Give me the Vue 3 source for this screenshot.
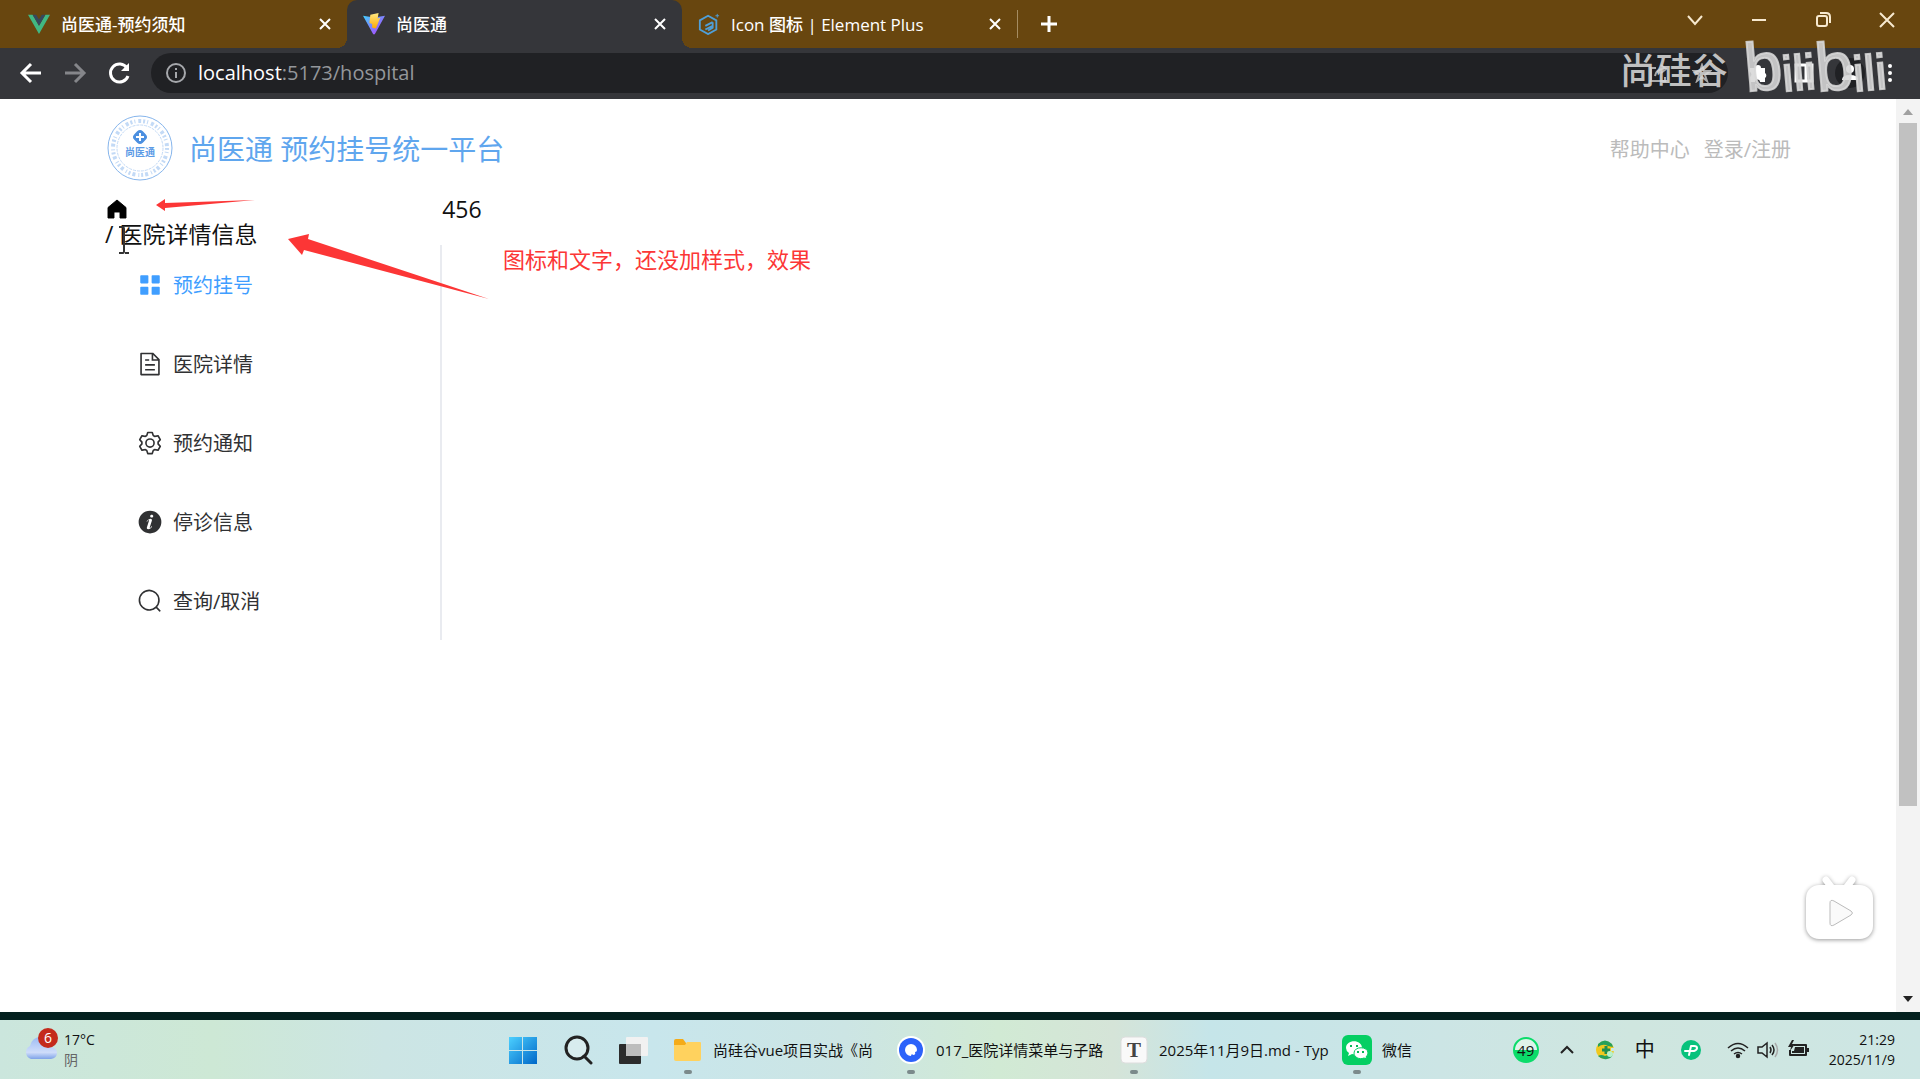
<template>
  <div class="desktop">
    <!-- Browser tabs -->
    <header class="tab-strip">
      <div v-for="tab in tabs" :key="tab.title" class="tab" :class="{ active: tab.active }">
        <svg v-if="tab.icon === 'vue'" class="favicon" viewBox="0 0 24 24">
          <path d="M0 2h5l7 12 7-12h5L12 23z" fill="#41b883" />
          <path d="M5 2h4l3 5 3-5h4l-7 12z" fill="#35495e" />
        </svg>
        <svg v-else-if="tab.icon === 'vite'" class="favicon" viewBox="0 0 24 24">
          <defs>
            <linearGradient id="viteBlue" x1="0" y1="0" x2="1" y2="1">
              <stop offset="0" stop-color="#41d1ff" />
              <stop offset="1" stop-color="#bd34fe" />
            </linearGradient>
            <linearGradient id="viteGold" x1="0" y1="0" x2="0" y2="1">
              <stop offset="0" stop-color="#ffea83" />
              <stop offset="1" stop-color="#ffa800" />
            </linearGradient>
          </defs>
          <path d="M0 3l12 2 12-2-11 20q-1 1-2 0z" fill="url(#viteBlue)" />
          <path d="M17 0l-9 2-1 9 3 1v4l4 1 5-12-3 1 1-6z" fill="url(#viteGold)" />
        </svg>
        <svg v-else class="favicon" viewBox="0 0 24 24" fill="none" stroke="#4f9fd8" stroke-width="2">
          <path d="M11 3l9 5v10l-9 5-9-5V8z" />
          <path d="M16 10l-8 4M16 14l-8 4M16 10v6l-5 3" />
          <path d="M21 1v4M19 3h4" stroke-width="1" />
        </svg>
        <span class="tab-title">{{ tab.title }}</span>
        <button class="tab-close" aria-label="关闭">
          <svg viewBox="0 0 16 16"><path d="M3 3l10 10M13 3L3 13" /></svg>
        </button>
      </div>
      <button class="new-tab" aria-label="新标签页">
        <svg viewBox="0 0 18 18"><path d="M9 1v16M1 9h16" /></svg>
      </button>
      <div class="window-controls">
        <button aria-label="搜索标签页"><svg viewBox="0 0 16 16"><path d="M1 4l7 8 7-8" /></svg></button>
        <button aria-label="最小化"><svg viewBox="0 0 16 16"><path d="M1 8h14" /></svg></button>
        <button aria-label="还原">
          <svg viewBox="0 0 16 16"><rect x="2" y="4" width="10" height="10" rx="2" /><path d="M5 1h6q4 0 4 4v6" /></svg>
        </button>
        <button aria-label="关闭窗口"><svg viewBox="0 0 16 16"><path d="M1 1l14 14M15 1L1 15" /></svg></button>
      </div>
    </header>

    <!-- Toolbar -->
    <div class="toolbar">
      <button class="nav-btn" aria-label="后退">
        <svg viewBox="0 0 24 24"><path d="M22 12H3M12 3l-9 9 9 9" /></svg>
      </button>
      <button class="nav-btn dim" aria-label="前进">
        <svg viewBox="0 0 24 24"><path d="M2 12h19M12 3l9 9-9 9" /></svg>
      </button>
      <button class="nav-btn" aria-label="刷新">
        <svg viewBox="0 0 24 24"><path d="M20 7a9 9 0 1 0 1 8" /><path d="M22 2v8h-8z" fill="#fff" stroke="none" /></svg>
      </button>
      <div class="address">
        <svg class="info" viewBox="0 0 20 20"><circle cx="10" cy="10" r="9" /><path d="M10 9v6M10 5v2" /></svg>
        <label for="url">localhost</label>
        <input id="url" v-model="url" type="text" />
        <button aria-label="分享">
          <svg viewBox="0 0 20 20"><path d="M7 5H2v13h14v-4M6 13q1-7 9-7M12 2l5 4-5 4" /></svg>
        </button>
        <button aria-label="收藏">
          <svg viewBox="0 0 20 20"><path d="M10 2l2 6h6l-5 4 2 6-5-4-5 4 2-6-5-4h6z" /></svg>
        </button>
      </div>
      <div class="toolbar-icons">
        <button aria-label="扩展程序">
          <svg viewBox="0 0 20 20"><path d="M2 5h5a3 3 0 0 1 6 0h4v5a3 3 0 0 1 0 5v4h-5a2 2 0 0 0-5 0H2v-5a3 3 0 0 0 0-5z" fill="#fff" /></svg>
        </button>
        <button aria-label="侧边栏">
          <svg viewBox="0 0 20 20"><path d="M2 2h16v16H2zM12 2v16" fill="none" stroke="#fff" stroke-width="3" /></svg>
        </button>
        <button class="avatar" aria-label="个人资料">
          <svg viewBox="0 0 20 20"><circle cx="10" cy="6" r="4" fill="#fff" /><path d="M2 17q0-5 8-5t8 5z" fill="#fff" /></svg>
        </button>
        <button class="more" aria-label="更多">
          <svg viewBox="0 0 8 20"><circle cx="4" cy="3" r="2" /><circle cx="4" cy="10" r="2" /><circle cx="4" cy="17" r="2" /></svg>
        </button>
      </div>
      <div class="watermark">
        <span class="brand">尚硅谷</span>
        <span class="bili"><b>b</b><i>ili</i><b>b</b><i>ili</i></span>
      </div>
    </div>

    <!-- Page -->
    <div class="viewport">
      <div class="page">
        <div class="top">
          <svg class="logo" viewBox="0 0 70 70">
            <circle cx="35" cy="35" r="32" fill="none" stroke="#86b5ec" />
            <circle cx="35" cy="35" r="27" fill="none" stroke="#c3daf6" stroke-width="4" stroke-dasharray="2 2 1 3 3 2" />
            <circle cx="35" cy="35" r="23" fill="#fff" stroke="#c3daf6" stroke-width="1" stroke-dasharray="3 1" />
            <rect x="29" y="18" width="12" height="12" rx="4" transform="rotate(45 35 24)" fill="#4b8fe0" />
            <path d="M35 20v8M31 24h8" stroke="#fff" stroke-width="2" />
            <text x="35" y="43" text-anchor="middle" font-size="10" font-weight="700" fill="#5c9be6">尚医通</text>
          </svg>
          <h1>尚医通 预约挂号统一平台</h1>
          <nav class="links">
            <a href="#help">帮助中心</a>
            <a href="#login">登录/注册</a>
          </nav>
        </div>
        <div class="content">
          <aside class="side">
            <div class="crumb">
              <svg class="home" viewBox="0 0 1024 1024">
                <path d="M512 128 128 447.936V896h255.936V640H640v256h255.936V447.936z" stroke="#000" stroke-width="40" stroke-linejoin="round" />
              </svg>
              <p>/ 医院详情信息</p>
            </div>
            <nav class="menu">
              <a v-for="item in menus" :key="item.text" href="#" :class="{ current: item.current }">
                <svg viewBox="0 0 1024 1024"><path :d="item.path" fill="currentColor" /></svg>
                <span>{{ item.text }}</span>
              </a>
            </nav>
          </aside>
          <main class="main">456</main>
        </div>
      </div>

      <!-- Annotations -->
      <svg class="arrows" viewBox="0 0 900 250" width="900" height="250">
        <path d="M156 106l9-6v4l90-3-90 8v3z" />
        <path d="M288 140l21-5-1 5 181 60-185-49-2 5z" />
        <path class="caret" d="M119 154h4q1 0 1-2v-22q0-2-2-2h-3M129 154h-4" />
      </svg>
      <p class="note">图标和文字，还没加样式，效果</p>

      <button class="bili-btn" aria-label="播放">
        <svg viewBox="0 0 88 84">
          <path d="M27 12l6 8M53 12l-6 8" stroke="#fff" stroke-width="7" stroke-linecap="round" />
          <rect x="7" y="17" width="67" height="54" rx="13" fill="#fff" />
          <path d="M31 35q0-4 4-2l17 10q3 2 0 4L35 57q-4 2-4-2z" fill="#fafafa" stroke="#bbb" />
        </svg>
      </button>

      <div class="scrollbar">
        <svg viewBox="0 0 10 6"><path d="M0 6l5-6 5 6z" fill="#a0a0a0" /></svg>
        <div class="track"><div class="thumb"></div></div>
        <svg viewBox="0 0 10 6"><path d="M0 0l5 6 5-6z" fill="#222" /></svg>
      </div>
    </div>

    <!-- Taskbar -->
    <footer class="taskbar">
      <div class="weather">
        <svg viewBox="0 0 36 36">
          <defs>
            <linearGradient id="cloud" x1="0" y1="0" x2="0" y2="1">
              <stop offset="0" stop-color="#9dbcf3" />
              <stop offset=".7" stop-color="#cfddfa" />
              <stop offset="1" stop-color="#7fa3e8" />
            </linearGradient>
          </defs>
          <path d="M6 34a7 7 0 0 1-1-13q2-9 11-9 9 1 10 10 6 1 6 6t-6 6z" fill="url(#cloud)" />
        </svg>
        <span class="badge">6</span>
        <div class="degrees">
          <div>17°C</div>
          <div class="sky">阴</div>
        </div>
      </div>

      <div class="apps">
        <button class="app" aria-label="开始">
          <svg viewBox="0 0 30 30">
            <defs>
              <linearGradient id="win" x1="0" y1="0" x2="1" y2="1">
                <stop offset="0" stop-color="#4cd0ff" />
                <stop offset="1" stop-color="#0067c8" />
              </linearGradient>
            </defs>
            <path d="M1 2h13v13H1zM15 2h14v13H15zM1 16h13v13H1zM15 16h14v13H15z" fill="url(#win)" />
          </svg>
        </button>
        <button class="app" aria-label="搜索">
          <svg viewBox="0 0 30 30" fill="none" stroke="#222" stroke-width="3">
            <circle cx="14" cy="13" r="11" fill="#d8ecee" /><path d="M21 21l7 7" stroke-linecap="round" />
          </svg>
        </button>
        <button class="app" aria-label="任务视图">
          <svg viewBox="0 0 30 30">
            <rect x="1" y="9" width="22" height="20" rx="1" fill="#2c2c2c" />
            <rect x="8" y="2" width="22" height="19" rx="1" fill="#f1f1f1" />
            <path d="M8 9h15v12H8z" fill="#bdbdbd" />
          </svg>
        </button>
        <button v-for="app in apps" :key="app.label" class="app" :class="{ short: app.icon === 'wechat' }">
          <svg v-if="app.icon === 'folder'" viewBox="0 0 30 30">
            <path d="M1 6q0-2 2-2h7l3 4v4H1z" fill="#f4ab18" />
            <path d="M1 10h11l2-3h13q1 0 1 1v16q0 2-2 2H3q-2 0-2-2z" fill="#ffd25e" />
          </svg>
          <svg v-else-if="app.icon === 'quark'" viewBox="0 0 30 30">
            <circle cx="15" cy="15" r="14" fill="#fff" />
            <circle cx="15" cy="15" r="12" fill="#2c62fa" />
            <path d="M21 15a6 6 0 1 0-6 6q0-1 1-2l1 1q3 0 2-3 2 0 2-2z" fill="#fff" />
          </svg>
          <svg v-else-if="app.icon === 'typora'" viewBox="0 0 30 30">
            <rect x="2" y="2" width="26" height="26" rx="4" fill="#f9f9f9" stroke="#ddd" />
            <text x="15" y="22" text-anchor="middle" font-size="21" font-weight="700" font-family="Liberation Serif, serif" fill="#444">T</text>
          </svg>
          <svg v-else viewBox="0 0 30 30">
            <rect width="30" height="30" rx="6" fill="#05cf63" />
            <path d="M4 13c0-9 16-9 16 0 0 6-6 7-10 6l-4 2 1-3q-3-2-3-5z" fill="#fff" />
            <path d="M12 18c0-7 14-7 14 0q0 2-2 4l1 2-3-1c-5 2-10-1-10-5z" fill="#fff" stroke="#05cf63" />
            <path d="M8 10h2v2H8zM14 10h2v2h-2zM15 16h2v2h-2zM20 16h2v2h-2z" fill="#05b757" />
          </svg>
          <span class="app-label">{{ app.label }}</span>
        </button>
      </div>

      <div class="tray">
        <span class="battery-ball">49</span>
        <button aria-label="显示隐藏的图标">
          <svg class="up" viewBox="0 0 16 16"><path d="M2 11l6-6 6 6" fill="none" stroke="#222" stroke-width="2" /></svg>
        </button>
        <svg class="mid" viewBox="0 0 20 20">
          <circle cx="10" cy="10" r="9" fill="#f0c81e" />
          <path d="M3 4q7-7 14 0l1 3-5-1Q8 3 3 7zM3 16q3-2 7 0l8-3q0 5-6 6-5 1-9-3z" fill="#27a05a" />
          <path d="M11 6v8M7 10h8" stroke="#1f8f50" stroke-width="3" />
          <path d="M16 8h4v3h-4z" fill="#cde6e4" />
          <circle cx="15" cy="14" r="3" fill="#b9f2cc" />
        </svg>
        <span class="ime">中</span>
        <svg class="mid spaced" viewBox="0 0 20 20">
          <circle cx="10" cy="10" r="10" fill="#08c27c" />
          <path d="M8 15l2-9h3q3 0 3 2t-3 3H4" fill="none" stroke="#fff" stroke-width="2" stroke-linecap="round" stroke-linejoin="round" />
        </svg>
        <div class="status">
          <svg viewBox="0 0 22 22" fill="none" stroke="#222" stroke-width="1.5">
            <path d="M1 9q10-9 20 0M4 12q7-6 14 0M7 15q4-3 8 0" /><circle cx="11" cy="17" r="1.5" fill="#222" />
          </svg>
          <svg viewBox="0 0 22 22" fill="none" stroke="#222" stroke-width="1.5">
            <path d="M1 8h4l5-4v14l-5-4H1zM13 8q2 3 0 6M15 6q4 5 0 10" /><path d="M18 4q5 7 0 14" stroke="#aaa" />
          </svg>
          <svg viewBox="0 0 22 22">
            <path d="M7 6h12v10H3v-5" fill="none" stroke="#222" stroke-width="2" stroke-linejoin="round" />
            <path d="M8 8h9v6H5v-2h2zM20 9h2v4h-2zM5 1L1 8h3l-1 4 5-7H5l2-4z" fill="#222" />
          </svg>
        </div>
        <div class="clock">
          <div>21:29</div>
          <div>2025/11/9</div>
        </div>
      </div>
    </footer>
  </div>
</template>

<script setup>
import { ref } from 'vue'

const url = ref(':5173/hospital')

const tabs = ref([
  { title: '尚医通-预约须知', icon: 'vue', active: false },
  { title: '尚医通', icon: 'vite', active: true },
  { title: 'Icon 图标 | Element Plus', icon: 'element', active: false },
])

// Left menu of the hospital page
const menus = ref([
  {
    text: '预约挂号',
    current: true,
    path: 'M160 448a32 32 0 0 1-32-32V160a32 32 0 0 1 32-32h256a32 32 0 0 1 32 32v256a32 32 0 0 1-32 32zm448 0a32 32 0 0 1-32-32V160a32 32 0 0 1 32-32h256a32 32 0 0 1 32 32v256a32 32 0 0 1-32 32zM160 896a32 32 0 0 1-32-32V608a32 32 0 0 1 32-32h256a32 32 0 0 1 32 32v256a32 32 0 0 1-32 32zm448 0a32 32 0 0 1-32-32V608a32 32 0 0 1 32-32h256a32 32 0 0 1 32 32v256a32 32 0 0 1-32 32z',
  },
  {
    text: '医院详情',
    path: 'M832 384H576V128H192v768h640V384zm-26.496-64L640 154.496V320h165.504zM160 64h480l256 256v608a32 32 0 0 1-32 32H160a32 32 0 0 1-32-32V96a32 32 0 0 1 32-32zm160 448h384v64H320v-64zm0-192h160v64H320v-64zm0 384h384v64H320v-64z',
  },
  {
    text: '预约通知',
    path: 'M600.704 64a32 32 0 0 1 30.464 22.208l35.2 109.376c14.784 7.232 28.928 15.36 42.432 24.512l112.384-24.192a32 32 0 0 1 34.432 15.36L944.32 364.8a32 32 0 0 1-4.032 37.504l-77.12 85.12a357.12 357.12 0 0 1 0 49.024l77.12 85.248a32 32 0 0 1 4.032 37.504l-88.704 153.6a32 32 0 0 1-34.432 15.296L708.8 803.904c-13.44 9.088-27.648 17.28-42.368 24.512l-35.264 109.376A32 32 0 0 1 600.704 960H423.296a32 32 0 0 1-30.464-22.208L357.696 828.48a351.616 351.616 0 0 1-42.56-24.64l-112.32 24.256a32 32 0 0 1-34.432-15.36L79.68 659.2a32 32 0 0 1 4.032-37.504l77.12-85.248a357.12 357.12 0 0 1 0-48.896l-77.12-85.248A32 32 0 0 1 79.68 364.8l88.704-153.6a32 32 0 0 1 34.432-15.296l112.32 24.256c13.568-9.152 27.776-17.408 42.56-24.64l35.2-109.312A32 32 0 0 1 423.232 64H600.64zm-23.424 64H446.72l-36.352 113.088-24.512 11.968a294.113 294.113 0 0 0-34.816 20.096l-22.656 15.36-116.224-25.088-65.28 113.152 79.68 88.192-1.92 27.136a293.12 293.12 0 0 0 0 40.192l1.92 27.136-79.808 88.192 65.344 113.152 116.224-25.024 22.656 15.296a294.113 294.113 0 0 0 34.816 20.096l24.512 11.968L446.72 896h130.688l36.48-113.152 24.448-11.904a288.282 288.282 0 0 0 34.752-20.096l22.592-15.296 116.288 25.024 65.28-113.152-79.744-88.192 1.92-27.136a293.12 293.12 0 0 0 0-40.256l-1.92-27.136 79.808-88.128-65.344-113.152-116.288 24.96-22.592-15.232a287.616 287.616 0 0 0-34.752-20.096l-24.448-11.904L577.344 128zM512 320a192 192 0 1 1 0 384 192 192 0 0 1 0-384zm0 64a128 128 0 1 0 0 256 128 128 0 0 0 0-256z',
  },
  {
    text: '停诊信息',
    path: 'M512 64a448 448 0 1 1 0 896.064A448 448 0 0 1 512 64zm67.2 275.072c33.28 0 60.288-23.104 60.288-57.344s-27.072-57.344-60.288-57.344c-33.28 0-60.16 23.104-60.16 57.344s26.88 57.344 60.16 57.344zM590.912 699.2c0-6.848 2.368-24.64 1.024-34.752l-52.608 60.544c-10.88 11.456-24.512 19.392-30.912 17.28a12.992 12.992 0 0 1-8.256-14.72l87.68-276.992c7.168-35.136-12.544-67.2-54.336-71.296-44.096 0-108.992 44.736-148.48 101.504 0 6.784-1.28 23.68.064 33.792l52.544-60.608c10.88-11.328 23.552-19.328 29.952-17.152a12.8 12.8 0 0 1 7.808 16.128L388.48 728.576c-10.048 32.256 8.96 63.872 55.04 71.04 67.84 0 107.904-43.648 147.456-100.416z',
  },
  {
    text: '查询/取消',
    path: 'm795.904 750.72 124.992 124.928a32 32 0 0 1-45.248 45.248L750.656 795.904a416 416 0 1 1 45.248-45.248zM480 832a352 352 0 1 0 0-704 352 352 0 0 0 0 704z',
  },
])

const apps = ref([
  { label: '尚硅谷vue项目实战《尚', icon: 'folder' },
  { label: '017_医院详情菜单与子路', icon: 'quark' },
  { label: '2025年11月9日.md - Typ', icon: 'typora' },
  { label: '微信', icon: 'wechat' },
])
</script>

<style>
body {
  background: #fff;
}
</style>

<style scoped>
.desktop {
  display: flex;
  flex-direction: column;
  min-height: 100vh;
  overflow: hidden;
  font-family: 'Open Sans', 'Noto Sans CJK SC', sans-serif;
  color: #111;
}

button {
  padding: 0;
  border: none;
  background: none;
  font: inherit;
  color: inherit;
}

svg {
  display: block;
  flex-shrink: 0;
}

a {
  color: inherit;
  text-decoration: none;
}

p, h1 {
  margin: 0;
}

/* tabs */
.tab-strip {
  display: flex;
  height: 48px;
  padding-left: 12px;
  background: #68460f;
}

.tab {
  position: relative;
  display: flex;
  align-items: center;
  gap: 11px;
  box-sizing: border-box;
  width: 335px;
  padding: 0 14px 1px 16px;
  color: #fff;
  font-size: 17px;
  font-weight: 500;
}

.tab.active {
  background: #35363a;
  border-radius: 10px 10px 0 0;
}

.tab.active::before,
.tab.active::after {
  content: '';
  position: absolute;
  bottom: 0;
  width: 10px;
  height: 10px;
}

.tab.active::before {
  right: 100%;
  background: radial-gradient(circle at 0 0, transparent 10px, #35363a 10px);
}

.tab.active::after {
  left: 100%;
  background: radial-gradient(circle at 100% 0, transparent 10px, #35363a 10px);
}

.favicon {
  width: 22px;
  height: 22px;
}

.tab-title {
  flex: 1;
  white-space: nowrap;
}

.tab-close svg {
  width: 16px;
  height: 16px;
  stroke: #fff;
  stroke-width: 2;
}

.new-tab {
  align-self: center;
  padding: 5px 22px;
  border-left: 1px solid #a58c62;
}

.new-tab svg {
  width: 18px;
  height: 18px;
  stroke: #fff;
  stroke-width: 3;
}

.window-controls {
  display: flex;
  gap: 48px;
  height: 40px;
  margin-left: auto;
  padding-right: 25px;
}

.window-controls svg {
  width: 16px;
  height: 16px;
  fill: none;
  stroke: #f7e9cf;
  stroke-width: 2;
}

/* toolbar */
.toolbar {
  position: relative;
  display: flex;
  align-items: center;
  box-sizing: border-box;
  height: 51px;
  padding: 0 26px 2px 19px;
  background: #35363a;
}

.nav-btn {
  margin-right: 20px;
}

.nav-btn svg {
  width: 24px;
  height: 24px;
  fill: none;
  stroke: #fff;
  stroke-width: 3;
}

.nav-btn.dim svg {
  stroke: #85868a;
}

.address {
  display: flex;
  align-items: center;
  flex: 1;
  box-sizing: border-box;
  height: 40px;
  margin-right: 20px;
  padding: 0 16px 0 15px;
  border-radius: 20px;
  background: #202124;
  color: #fff;
  font-size: 20px;
}

.address .info {
  width: 20px;
  height: 20px;
  margin-right: 12px;
  fill: none;
  stroke: #a6a8ac;
  stroke-width: 2;
}

.address input {
  flex: 1;
  min-width: 0;
  padding: 0;
  border: none;
  outline: none;
  background: none;
  color: #94979b;
  font: inherit;
}

.address button {
  margin-left: 23px;
}

.address button svg {
  width: 20px;
  height: 20px;
  fill: none;
  stroke: #aaa;
  stroke-width: 2;
}

.toolbar-icons {
  display: flex;
  gap: 26px;
}

.toolbar-icons svg {
  width: 20px;
  height: 20px;
}

.toolbar-icons .avatar {
  border-radius: 50%;
  background: #202124;
  box-shadow: 0 0 0 5px #202124;
}

.toolbar-icons .more svg {
  width: 8px;
  fill: #fff;
}

.watermark {
  position: absolute;
  right: 34px;
  bottom: 0;
  display: flex;
  align-items: flex-end;
  gap: 16px;
  color: rgba(215, 215, 215, 0.88);
}

.brand {
  font-size: 36px;
  font-weight: 500;
  line-height: 56px;
}

.bili {
  display: flex;
  align-items: baseline;
  font-family: 'Liberation Sans', sans-serif;
  line-height: 52px;
  -webkit-text-stroke: 2px rgba(215, 215, 215, 0.88);
}

.bili b,
.bili i {
  display: block;
  font-size: 68px;
  font-style: normal;
  font-weight: 400;
  transform: rotate(-5deg);
}

.bili i {
  font-size: 50px;
}

/* page */
.viewport {
  position: relative;
  display: flex;
  flex: 1;
  background: #fff;
}

.page {
  flex: 1;
  padding: 0 105px;
}

.top {
  display: flex;
  align-items: center;
  height: 98px;
}

.logo {
  width: 70px;
  height: 70px;
}

.top h1 {
  margin-left: 14px;
  color: #5fa6ee;
  font-size: 28px;
  font-weight: 400;
}

.links {
  display: flex;
  gap: 14px;
  margin-left: auto;
  color: #bbb;
  font-size: 20px;
}

.content {
  display: flex;
}

.side {
  width: 20%;
}

.crumb {
  height: 48px;
  font-size: 23px;
  line-height: 26px;
}

.home {
  width: 24px;
  height: 24px;
}

.menu {
  border-right: 2px solid #e9ebf0;
}

.menu a {
  display: flex;
  align-items: center;
  gap: 10px;
  height: 79px;
  padding-left: 32px;
  color: #303133;
  font-size: 20px;
}

.menu a.current {
  color: #409eff;
}

.menu svg {
  width: 26px;
  height: 26px;
}

.main {
  flex: 1;
  font-size: 23px;
  line-height: 24px;
}

.arrows {
  position: absolute;
  top: 0;
  left: 0;
  fill: #fc3636;
  pointer-events: none;
}

.caret {
  fill: none;
  stroke: #333;
  stroke-width: 2;
}

.note {
  position: absolute;
  top: 144px;
  left: 503px;
  color: #fc3636;
  font-size: 22px;
  line-height: 32px;
}

.bili-btn {
  position: absolute;
  right: 33px;
  bottom: 60px;
}

.bili-btn svg {
  width: 88px;
  height: 84px;
  filter: drop-shadow(0 1px 2px rgba(0, 0, 0, 0.4));
}

.scrollbar {
  display: flex;
  flex-direction: column;
  align-items: center;
  gap: 8px;
  box-sizing: border-box;
  width: 24px;
  padding: 10px 0;
  background: #f3f3f3;
}

.scrollbar svg {
  width: 10px;
  height: 6px;
}

.track {
  flex: 1;
  width: 18px;
}

.thumb {
  height: 79%;
  background: #c1c1c1;
}

/* taskbar */
.taskbar {
  display: grid;
  grid-template-columns: 1fr auto 1fr;
  align-items: center;
  box-sizing: border-box;
  height: 67px;
  padding: 0 25px;
  border-top: 8px solid #04211f;
  background: linear-gradient(90deg, #cbe6dd 0%, #cde8d5 11%, #cce5e4 20%, #c8e6ec 34%, #cce5e4 44%, #d1ead4 52%, #d5e4d8 58%, #c5e5e9 63%, #cce5e5 75%, #cfe6df 85%, #cde6e4 100%);
  font-size: 15px;
  line-height: 20px;
}

.weather {
  position: relative;
  display: flex;
  align-items: center;
  gap: 3px;
}

.weather svg {
  width: 36px;
  height: 36px;
  margin-top: -14px;
}

.badge {
  position: absolute;
  top: -2px;
  left: 13px;
  width: 20px;
  height: 20px;
  border-radius: 50%;
  background: #c42b1c;
  color: #fff;
  font-size: 14px;
  text-align: center;
}

.degrees {
  font-size: 14px;
}

.sky {
  color: #666;
}

.apps {
  display: flex;
  gap: 25px;
}

.app {
  position: relative;
  display: flex;
  align-items: center;
  gap: 10px;
}

.app svg {
  width: 30px;
  height: 30px;
}

.app-label {
  width: 158px;
  text-align: left;
  white-space: nowrap;
}

.app.short .app-label {
  width: 30px;
}

/* running indicator */
.app:nth-child(n + 4)::after {
  content: '';
  position: absolute;
  bottom: -9px;
  left: 11px;
  width: 8px;
  height: 4px;
  border-radius: 2px;
  background: #7b8a8b;
}

.tray {
  display: flex;
  align-items: center;
  justify-content: flex-end;
  gap: 20px;
}

.battery-ball {
  box-sizing: border-box;
  width: 26px;
  height: 26px;
  border: 2px solid #0bdc6a;
  border-radius: 50%;
  background: linear-gradient(#dff3ea 50%, #0bdc6a 50%);
  line-height: 22px;
  text-align: center;
}

.up {
  width: 16px;
  height: 16px;
}

.mid {
  width: 20px;
  height: 20px;
}

.spaced {
  margin: 0 6px;
}

.ime {
  font-size: 20px;
}

.status {
  display: flex;
  gap: 8px;
}

.status svg {
  width: 22px;
  height: 22px;
}

.clock {
  font-size: 14px;
  text-align: right;
}
</style>
